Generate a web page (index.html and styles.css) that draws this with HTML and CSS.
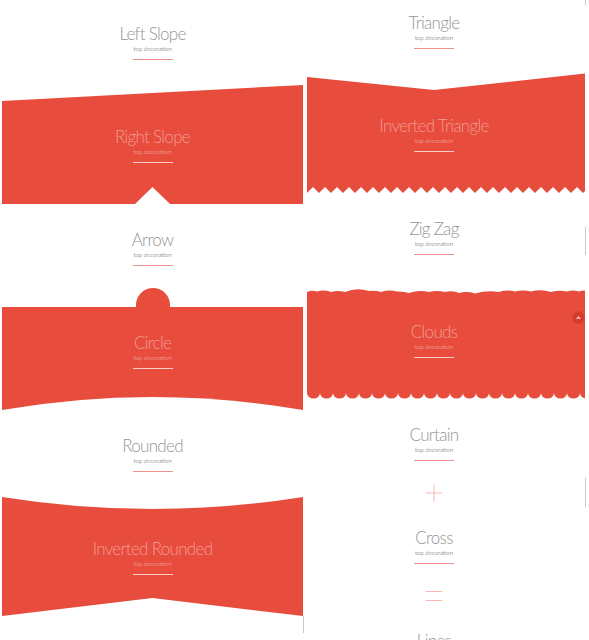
FILE: index.html
```html
<!DOCTYPE html>
<html lang="en">
<head>
<meta charset="utf-8">
<title>Section decorations</title>
<link rel="stylesheet" href="styles.css">
</head>
<body>
<div class="page">
  <div class="col col-left">
    <section class="sec white">
      <h2 class="title">Left Slope</h2>
      <p class="sub">top decoration</p>
      <span class="rule"></span>
    </section>
    <section class="sec red">
      <svg class="deco deco-slope" width="301" height="16" viewBox="0 0 301 16"><polygon points="0,16 301,0 301,16" fill="#e74c3c"/></svg>
      <h2 class="title">Right Slope</h2>
      <p class="sub">top decoration</p>
      <span class="rule"></span>
    </section>
    <section class="sec white">
      <svg class="deco deco-arrow" width="35" height="17" viewBox="0 0 35 17"><polygon points="0,17 17.5,0 35,17" fill="#fff"/></svg>
      <h2 class="title">Arrow</h2>
      <p class="sub">top decoration</p>
      <span class="rule"></span>
    </section>
    <section class="sec red">
      <span class="deco deco-circle"></span>
      <h2 class="title">Circle</h2>
      <p class="sub">top decoration</p>
      <span class="rule"></span>
    </section>
    <section class="sec white">
      <svg class="deco deco-rounded" width="301" height="13" viewBox="0 0 301 13"><path d="M0,13 Q150.5,-13 301,13 Z" fill="#fff"/></svg>
      <h2 class="title">Rounded</h2>
      <p class="sub">top decoration</p>
      <span class="rule"></span>
    </section>
    <section class="sec red">
      <svg class="deco deco-invrounded" width="301" height="16" viewBox="0 0 301 16"><path d="M0,0 Q150.5,24 301,0 L301,16 L0,16 Z" fill="#e74c3c"/></svg>
      <h2 class="title">Inverted Rounded</h2>
      <p class="sub">top decoration</p>
      <span class="rule"></span>
    </section>
    <section class="sec white sec-end">
      <svg class="deco deco-peak" width="301" height="18" viewBox="0 0 301 18"><polygon points="0,18 150.5,0 301,18" fill="#fff"/></svg>
    </section>
  </div>

  <div class="col col-right">
    <section class="sec white">
      <h2 class="title">Triangle</h2>
      <p class="sub">top decoration</p>
      <span class="rule"></span>
    </section>
    <section class="sec red">
      <svg class="deco deco-vee" width="278" height="17" viewBox="0 0 278 17"><polygon points="0,4 127,17 278,0.5 278,17 0,17" fill="#e74c3c"/></svg>
      <h2 class="title">Inverted Triangle</h2>
      <p class="sub">top decoration</p>
      <span class="rule"></span>
    </section>
    <section class="sec white">
      <svg class="deco deco-zigzag" width="278" height="6" viewBox="0 0 278 6">
        <defs><pattern id="zz" width="12" height="6" patternUnits="userSpaceOnUse"><polygon points="0,6 6,0 12,6" fill="#fff"/></pattern></defs>
        <rect width="278" height="6" fill="url(#zz)"/>
      </svg>
      <h2 class="title">Zig Zag</h2>
      <p class="sub">top decoration</p>
      <span class="rule"></span>
    </section>
    <section class="sec red">
      <svg class="deco deco-clouds" width="278" height="9" viewBox="0 0 278 9"><path d="M0,9 L0,5 Q5,3 10,4.5 Q17,2.5 24,5 Q31,3 38,5 Q50,0 62,4 Q68,3 74,5 Q82,2.5 90,4.5 Q96,4 102,6 Q112,2.5 122,5 Q130,3 138,5 Q146,3 152,6 Q160,4 168,6.5 Q180,3 192,5 Q200,2.5 208,4.5 Q216,2.5 224,4.5 Q234,2 244,5 Q252,3 260,4.5 Q266,2.5 272,4.5 Q276,3 278,3.5 L278,9 Z" fill="#e74c3c"/></svg>
      <h2 class="title">Clouds</h2>
      <p class="sub">top decoration</p>
      <span class="rule"></span>
    </section>
    <section class="sec white">
      <svg class="deco deco-curtain" width="278" height="6" viewBox="0 0 278 6">
        <defs><pattern id="sc" width="13" height="6" patternUnits="userSpaceOnUse"><rect width="13" height="6" fill="#fff"/><path d="M0,0 A6.5,5.5 0 0 0 13,0 Z" fill="#e74c3c"/></pattern></defs>
        <rect width="278" height="6" fill="url(#sc)"/>
      </svg>
      <h2 class="title">Curtain</h2>
      <p class="sub">top decoration</p>
      <span class="rule"></span>
    </section>
    <section class="sec white">
      <svg class="deco deco-cross" width="18" height="18" viewBox="0 0 18 18"><path d="M9,0.5 V17.5 M0.5,9 H17.5" stroke="#f6b9b2" stroke-width="1" fill="none"/></svg>
      <h2 class="title">Cross</h2>
      <p class="sub">top decoration</p>
      <span class="rule"></span>
    </section>
    <section class="sec white">
      <svg class="deco deco-lines" width="18" height="12" viewBox="0 0 18 12"><path d="M0.5,1.5 H17.5 M0.5,10.5 H17.5" stroke="#f6b9b2" stroke-width="1" fill="none"/></svg>
      <h2 class="title">Lines</h2>
      <p class="sub">top decoration</p>
      <span class="rule"></span>
    </section>
  </div>

  <a class="totop" href="#" aria-label="Back to top"></a>
  <span class="scrollbar sb-1"></span>
  <span class="scrollbar sb-2"></span>
  <span class="scrollbar sb-3"></span>
  <span class="scrollbar sb-4"></span>
</div>
</body>
</html>
```

FILE: styles.css
```css
html, body {
  margin: 0;
  padding: 0;
  height: 640px;
  overflow: hidden;
  background: #fff;
}

.page {
  position: relative;
  display: flex;
  align-items: flex-start;
  gap: 4px;
  padding-left: 2px;
  height: 640px;
  overflow: hidden;
  font-family: "Lato Light", Lato, "Open Sans", sans-serif;
}

.col {
  flex: none;
  display: flex;
  flex-direction: column;
}

.col-left {
  width: 301px;
  margin-top: -2px;
  --cx: 150.5px;
}

.col-right {
  width: 278px;
  margin-top: -13px;
  --cx: 127px;
}

.sec {
  position: relative;
  flex: none;
  height: 103px;
  box-sizing: border-box;
  padding-top: 26px;
  display: flex;
  flex-direction: column;
  align-items: center;
}

.sec-end {
  height: 24px;
}

.col-right .sec {
  padding-right: 24px;
}

.white { background: #fff; }
.red { background: #e74c3c; }

.title {
  margin: 0;
  font-weight: 300;
  font-size: 17px;
  line-height: 20px;
  letter-spacing: -0.7px;
  color: #959595;
  white-space: nowrap;
}

.sub {
  margin: 0;
  font-size: 6px;
  line-height: 9px;
  color: #444;
  white-space: nowrap;
}

.rule {
  display: block;
  margin-top: 6px;
  width: 40px;
  height: 1px;
  background: #f0928a;
}

.red .title { color: rgba(255, 255, 255, 0.45); }
.red .sub { color: rgba(255, 255, 255, 0.7); }
.red .rule { background: rgba(255, 255, 255, 0.72); }

.deco {
  position: absolute;
  left: 0;
  display: block;
}

.deco-slope { top: -16px; }
.deco-arrow { top: -17px; left: calc(var(--cx) - 17.5px); }
.deco-circle {
  top: -19px;
  left: calc(var(--cx) - 17px);
  width: 34px;
  height: 34px;
  border-radius: 50%;
  background: #e74c3c;
}
.deco-rounded { top: -13px; }
.deco-invrounded { top: -16px; }
.deco-peak { top: -18px; }

.deco-vee { top: -17px; }
.deco-zigzag { top: -6px; }
.deco-clouds { top: -9px; }
.deco-curtain { top: -6px; }
.deco-cross { top: -18px; left: calc(var(--cx) - 9px); }
.deco-lines { top: -15px; left: calc(var(--cx) - 9px); }

.totop {
  position: absolute;
  left: 573px;
  top: 312px;
  width: 11px;
  height: 11px;
  border-radius: 50%;
  background: #d63a2a;
  box-shadow: 0 0 0 1px rgba(200, 50, 35, 0.4);
}
.totop::after {
  content: "";
  position: absolute;
  left: 4px;
  top: 4.5px;
  width: 2px;
  height: 2px;
  border-left: 1px solid #fff;
  border-top: 1px solid #fff;
  transform: rotate(45deg);
}

.scrollbar {
  position: absolute;
  width: 1px;
  background: #c8c8c8;
}
.sb-1 { left: 585px; top: 0; height: 5px; }
.sb-2 { left: 585px; top: 227px; height: 28px; }
.sb-3 { left: 585px; top: 478px; height: 29px; }
.sb-4 { left: 303px; top: 616px; height: 17px; }
```
